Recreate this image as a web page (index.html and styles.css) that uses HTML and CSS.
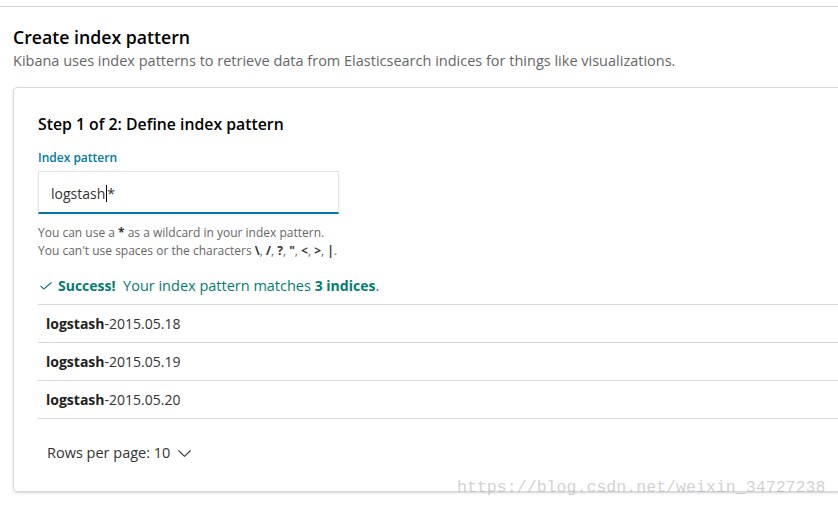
FILE: index.html
```html
<!DOCTYPE html>
<html>
<head>
<meta charset="utf-8">
<link rel="stylesheet" href="styles.css">
</head>
<body>
<div class="topbar"></div>
<header class="page-header">
  <h1 class="title">Create index pattern</h1>
  <p class="subtitle">Kibana uses index patterns to retrieve data from Elasticsearch indices for things like visualizations.</p>
</header>
<section class="card">
  <h2 class="step">Step 1 of 2: Define index pattern</h2>
  <label class="label">Index pattern</label>
  <div class="input"><span>logstash</span><span class="caret"></span><span>*</span></div>
  <div class="help">
    <div>You can use a <b>*</b> as a wildcard in your index pattern.</div>
    <div>You can't use spaces or the characters <b>\</b>, <b>/</b>, <b>?</b>, <b>"</b>, <b>&lt;</b>, <b>&gt;</b>, <b>|</b>.</div>
  </div>
  <div class="success"><svg class="check" width="12" height="8" viewBox="0 0 12 8"><path d="M0.5 3.8 L3.8 7 L11.5 0.5" fill="none" stroke="#017d73" stroke-width="1.1"/></svg><b>Success!</b>&nbsp; Your index pattern matches <b>3 indices</b>.</div>
  <div class="table">
    <div class="row"><b>logstash</b>-2015.05.18</div>
    <div class="row"><b>logstash</b>-2015.05.19</div>
    <div class="row"><b>logstash</b>-2015.05.20</div>
  </div>
  <div class="pager">
    <span>Rows per page: 10</span>
    <svg class="chev" width="13" height="7" viewBox="0 0 13 7"><path d="M0.5 0.5 L6.5 6.3 L12.5 0.5" fill="none" stroke="#333" stroke-width="1.1"/></svg>
  </div>
</section>
<div class="watermark">https://blog.csdn.net/weixin_34727238</div>
</body>
</html>
```
FILE: styles.css
```css
html, body {
  margin: 0;
  padding: 0;
  background: #fff;
  overflow: hidden;
  width: 838px;
  height: 507px;
}
body {
  font-family: "Open Sans", "Liberation Sans", sans-serif;
  color: #333;
  position: relative;
}
.topbar {
  height: 6px;
  border-bottom: 1px solid #d9d9d9;
}
.page-header {
  padding: 18px 0 0 13px;
}
.title {
  margin: 0;
  font-size: 17.7px;
  line-height: 24px;
  font-weight: 600;
  color: #000;
}
.subtitle {
  margin: 0;
  font-size: 14.5px;
  line-height: 22px;
  padding-top: 1px;
  color: #666;
  font-weight: 400;
}
.card {
  margin: 15px 0 0 13px;
  width: 860px;
  border: 1px solid #d9d9d9;
  border-radius: 4px;
  box-shadow: 0 1px 3px rgba(0,0,0,0.12), 0 2px 2px -1px rgba(0,0,0,0.06);
  padding: 24px 24px 28px 24px;
  box-sizing: border-box;
  display: flex;
  flex-direction: column;
  align-items: flex-start;
}
.step {
  margin: 0;
  font-size: 15.8px;
  line-height: 24px;
  font-weight: 600;
  color: #000;
}
.label {
  margin-top: 13px;
  font-size: 12px;
  line-height: 18px;
  font-weight: 600;
  color: #0079a5;
}
.input {
  margin-top: 4px;
  width: 301px;
  height: 43px;
  box-sizing: border-box;
  border: 1px solid #e4e4e4;
  border-bottom: 2px solid #0079a5;
  box-shadow: 0 1px 3px rgba(0,0,0,0.06);
  padding: 2px 12px 0 12px;
  display: flex;
  align-items: center;
  font-size: 14px;
  color: #333;
}
.caret {
  display: inline-block;
  width: 1px;
  height: 17px;
  background: #000;
  margin: 0 0 0 1px;
}
.help {
  margin-top: 10px;
  font-size: 12px;
  line-height: 18px;
  color: #666;
}
.help b {
  color: #333;
}
.success {
  margin-top: 16px;
  font-size: 14.5px;
  line-height: 20px;
  color: #017d73;
  padding-left: 2px;
}
.success b {
  font-weight: 700;
  font-size: 14px;
}
.check {
  margin-right: 6px;
  vertical-align: 1px;
}
.table {
  margin-top: 8px;
  align-self: stretch;
  border-top: 1px solid #d9d9d9;
}
.row {
  height: 37px;
  border-bottom: 1px solid #d9d9d9;
  padding-left: 8px;
  display: flex;
  align-items: center;
  font-size: 14px;
  color: #333;
}
.row b {
  font-weight: 700;
  color: #222;
}
.pager {
  margin-top: 24px;
  padding-left: 9px;
  font-size: 14.5px;
  line-height: 20px;
  color: #333;
  display: flex;
  align-items: center;
}
.chev {
  margin-left: 8px;
  margin-top: 1px;
}
.watermark {
  position: absolute;
  left: 457px;
  top: 478px;
  font-family: "Liberation Mono", "DejaVu Sans Mono", monospace;
  font-size: 16.6px;
  line-height: 20px;
  color: rgba(170,170,170,0.55);
  white-space: nowrap;
}
```
